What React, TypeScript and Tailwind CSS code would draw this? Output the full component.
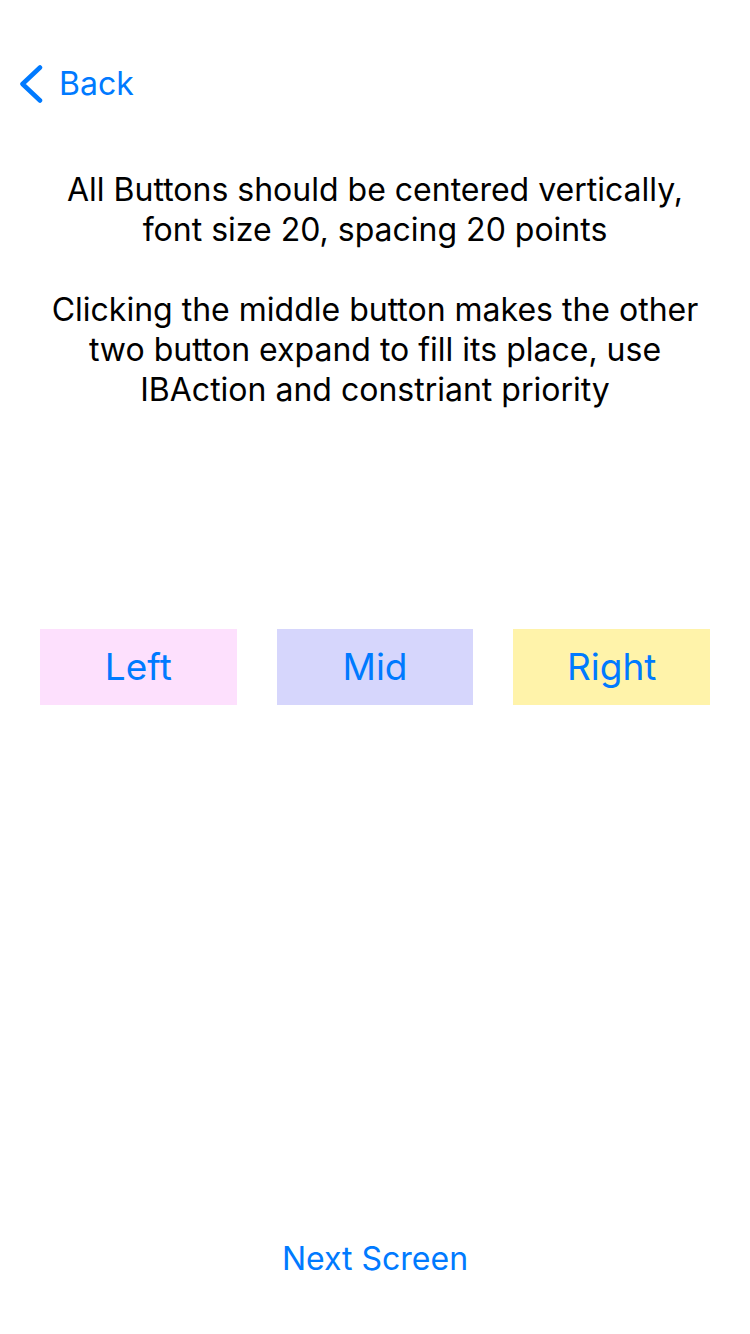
const font = { fontFamily: "Inter, 'Noto Sans', sans-serif" }

function ColorButton({ label, bg }: { label: string; bg: string }) {
  return (
    <button className={`flex h-[76px] flex-1 items-center justify-center text-[37px] text-[#007aff] ${bg}`}>
      {label}
    </button>
  )
}

export default function App() {
  return (
    <div className="flex h-[1334px] w-[750px] flex-col bg-white text-black" style={font}>
      {/* Nav bar */}
      <div className="flex h-[170px] items-start pt-[62px]">
        <button className="flex items-center pl-[19px] text-[32px] text-[#007aff]">
          <svg width="24" height="44" viewBox="0 0 24 44" fill="none">
            <path d="M21 5.5 L3.5 22 L21 38.5" stroke="#007aff" strokeWidth="4.5" strokeLinecap="round" strokeLinejoin="round" />
          </svg>
          <span className="ml-[16px] leading-[44px]">Back</span>
        </button>
      </div>

      <div className="flex flex-col gap-[40px] px-[30px] text-center text-[32px] leading-[40px]">
        <p>
          All Buttons should be centered vertically,
          <br />
          font size 20, spacing 20 points
        </p>
        <p>
          Clicking the middle button makes the other
          <br />
          two button expand to fill its place, use
          <br />
          IBAction and constriant priority
        </p>
      </div>

      <div className="mt-[219px] flex gap-[40px] px-[40px]">
        <ColorButton label="Left" bg="bg-[#fde0fd]" />
        <ColorButton label="Mid" bg="bg-[#d6d6fc]" />
        <ColorButton label="Right" bg="bg-[#fff3aa]" />
      </div>

      <div className="mt-auto flex justify-center pb-[50px]">
        <button className="text-[32px] leading-[50px] text-[#007aff]">Next Screen</button>
      </div>
    </div>
  )
}
